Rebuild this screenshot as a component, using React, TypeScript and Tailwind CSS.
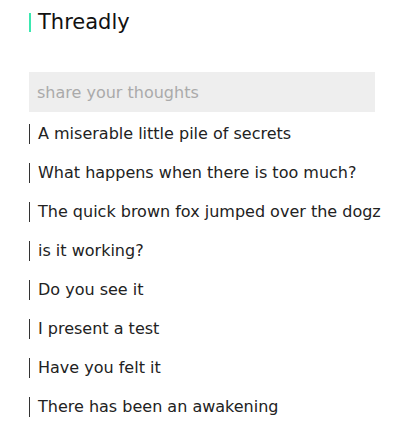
import React, { useState } from 'react';

const threads = [
  'A miserable little pile of secrets',
  'What happens when there is too much?',
  'The quick brown fox jumped over the dogz',
  'is it working?',
  'Do you see it',
  'I present a test',
  'Have you felt it',
  'There has been an awakening',
];

export default function App() {
  const [draft, setDraft] = useState('');

  return (
    <div className="min-h-[433px] bg-white pl-[29px] pt-[13px] font-['DejaVu_Sans',sans-serif] text-[#222]">
      <h1 className="border-l-2 border-[#3be8b0] pl-[7px] text-[21px] leading-[19px] text-[#111]">
        Threadly
      </h1>

      <input
        value={draft}
        onChange={(e) => setDraft(e.target.value)}
        placeholder="share your thoughts"
        className="mt-[40px] block h-[40px] w-[346px] bg-[#eeeeee] px-[8px] text-[16px] outline-none placeholder:text-[#aaaaaa]"
      />

      <ul className="flex flex-col gap-[19.1px] pt-[11.5px]">
        {threads.map((t) => (
          <li key={t} className="whitespace-nowrap border-l border-[#333] pl-[8px] text-[16px] leading-[20px]">
            {t}
          </li>
        ))}
      </ul>
    </div>
  );
}
